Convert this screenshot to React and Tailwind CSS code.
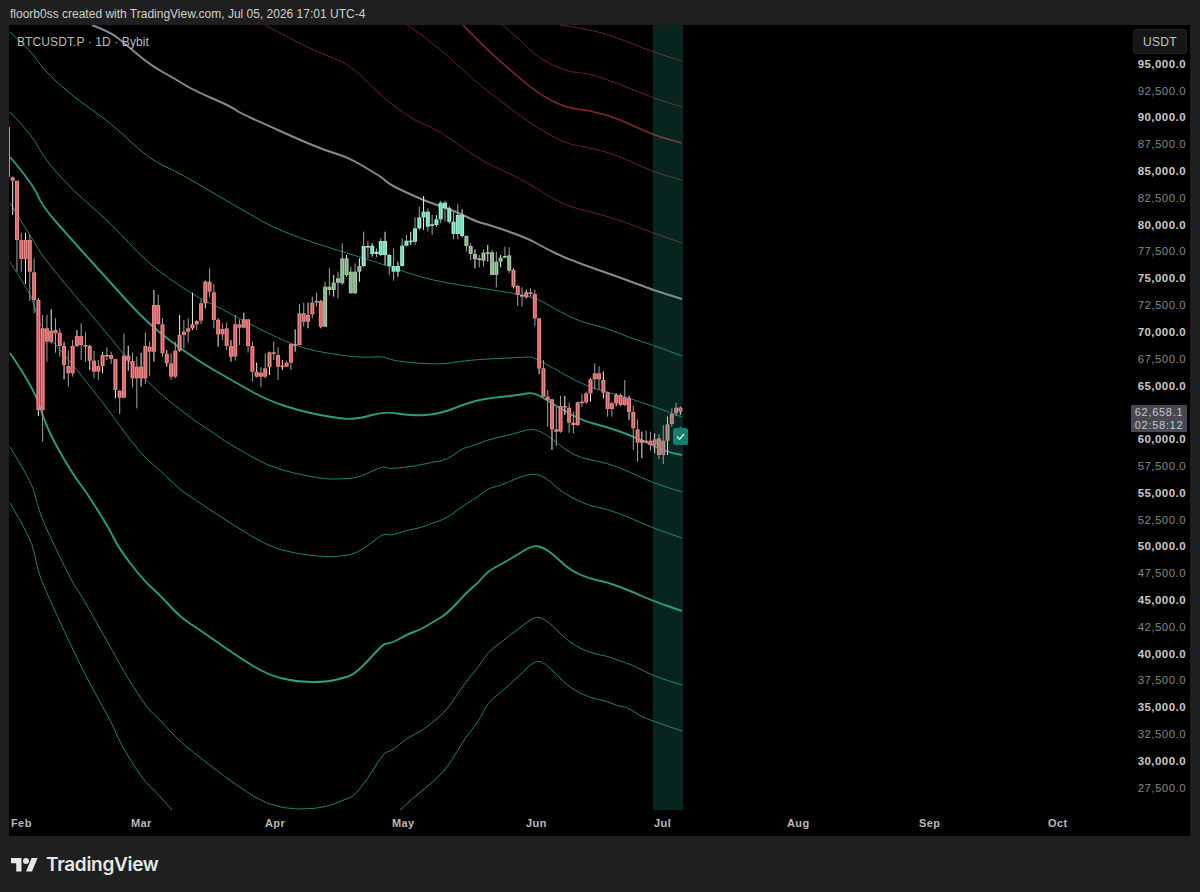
import React from "react"

const FONT = "font-['Liberation_Sans',Arial,sans-serif]"

// chart lines, in page pixels
const REDS = [
  { w: 1, pts: "560,25 587,29 613,36 653,52 682,61" },
  { w: 1, pts: "503,25 520,40 537,57 567,72 587,73 617,83 653,98 682,107" },
  { w: 1.6, pts: "463,25 480,43 510,70 540,95 567,108 587,110 617,118 653,135 682,143" },
  { w: 1, pts: "407,25 427,38 460,67 477,83 510,108 537,128 567,144 587,147 617,155 653,172 682,180" },
  { w: 1, pts: "265,25 293,40 317,52 347,63 363,78 388,102 417,122 430,126 457,143 477,158 497,168 523,180 543,193 567,206 587,211 617,219 653,233 682,243" },
]

const MID = "92,25 110,32 123,42 150,65 177,80 193,90 230,106 240,113 267,125 300,140 327,151 347,157 363,166 383,178 390,185 423,200 437,205 457,212 477,222 490,225 527,238 543,247 567,259 627,280 653,290 682,299"

const GREENS = [
  { w: 1, pts: "10,32 33,53 42,68 73,97 110,122 150,160 180,173 230,203 250,214 270,226 300,238 327,247 360,257 400,270 420,277 447,283 473,287 513,293 537,298 553,308 580,322 607,328 630,338 653,345 682,356" },
  { w: 1, pts: "10,112 33,136 43,157 73,191 110,222 147,263 193,295 220,308 267,333 290,343 300,347 320,352 360,358 383,356 393,361 440,365 467,360 527,357 533,357 553,368 587,387 630,398 682,417" },
  { w: 1.9, pts: "10,157 33,184 42,206 72,240 110,282 147,323 193,358 240,385 267,400 300,411 330,417 355,420 385,411 410,416 440,414 470,402 490,398 520,395 533,392 550,402 580,420 607,427 630,435 667,452 682,455" },
  { w: 1, pts: "10,203 33,240 43,257 72,292 110,337 147,383 193,420 217,435 223,440 240,450 268,466 297,474 325,479 340,479 357,478 370,472 384,466 389,469 407,467 420,465 433,462 447,460 463,448 473,446 487,440 505,436 520,432 533,428 547,435 557,443 573,455 590,460 607,463 630,472 653,483 682,492" },
  { w: 1, pts: "10,262 20,277 33,300 37,316 43,330 75,367 110,412 130,440 147,460 160,470 180,490 200,503 233,525 268,546 297,554 327,557 343,556 357,553 370,544 384,533 390,536 407,530 420,528 433,523 447,518 467,503 478,497 488,488 500,486 517,478 533,473 545,477 557,488 570,497 590,506 607,509 633,519 653,528 682,538" },
  { w: 1.9, pts: "10,353 33,387 43,417 53,440 72,473 87,493 110,530 118,547 143,580 160,595 180,617 197,628 217,642 240,658 268,675 297,682 327,682 343,678 353,675 367,662 384,643 390,644 410,633 420,630 433,622 447,614 467,592 478,583 488,571 500,565 517,555 533,545 545,548 557,558 570,570 590,579 607,582 633,592 653,601 682,611" },
  { w: 1, pts: "10,447 20,463 33,487 37,503 43,522 72,582 80,593 112,650 127,677 147,708 160,720 180,742 207,763 240,788 268,805 297,810 327,807 343,800 353,797 367,780 384,752 390,752 407,738 420,732 433,722 447,710 467,680 478,668 488,652 500,643 517,630 535,616 545,619 557,630 570,643 590,653 607,656 617,660 633,665 653,676 682,685" },
  { w: 1, pts: "10,503 20,520 33,545 37,567 43,585 72,648 93,690 112,723 120,743 143,780 157,793 172,810" },
  { w: 1, pts: "400,810 413,798 433,782 447,768 467,735 478,723 488,702 500,693 517,678 535,660 545,663 557,675 570,688 590,698 607,701 617,706 627,707 642,717 653,721 682,731" },
]

// turn "x,y x,y" into a path that rounds off the corners
function smooth(pts) {
  const p = pts.split(" ").map((s) => s.split(",").map(Number))
  let d = `M${p[0][0]} ${p[0][1]}`
  for (let i = 1; i < p.length - 1; i++) {
    const mx = (p[i][0] + p[i + 1][0]) / 2
    const my = (p[i][1] + p[i + 1][1]) / 2
    d += ` Q${p[i][0]} ${p[i][1]} ${mx} ${my}`
  }
  const last = p[p.length - 1]
  return d + ` L${last[0]} ${last[1]}`
}

// candles: body top, body bottom, wick top, wick bottom (read off at 3x, origin is the crop's top)
const toPage = (origin, rows) => rows.map((r) => r.map((v) => origin + v / 3))

const CANDLES = [
  ...toPage(160, [
    [52,62,50,165],[62,240,62,335],[240,297,218,335],[240,297,218,372],[240,335,225,423],[337,420,295,460],[420,750,415,768],[505,750,465,845],
    [505,545,465,605],[512,545,448,550],[510,520,475,578],[518,558,505,590],[558,615,545,658],[618,640,572,680],[558,640,540,650],[528,558,510,560],
    [528,555,490,600],[555,556,517,605],[558,602,555,630],[602,635,572,655],[618,635,600,660],[585,618,575,640],[585,587,562,600],[585,597,575,612],
    [597,690,597,715],[692,713,690,762],[587,713,520,715],[587,602,557,632],[603,655,578,682],[620,655,590,745],[620,655,578,680],[558,655,518,672],
    [560,575,545,648],[435,575,390,605],[435,492,405,495],[493,580,475,590],[582,610,570,620],[610,650,580,660],[572,650,545,655],[525,572,465,575],
    [515,525,480,565],[505,515,475,548],[493,505,398,510],[483,493,480,510],[430,482,418,492],[365,430,362,445],[365,395,325,412],[397,480,372,505],
    [480,523,475,560],[507,523,490,540],[505,558,488,570],[558,590,540,605],[493,590,465,602],[493,503,478,555],[478,503,458,505],[478,558,478,578],
    [558,635,545,665],[635,650,608,652],[638,650,622,682],[625,650,580,655],[577,622,575,645],[577,580,545,600],[585,620,562,660],[617,619,600,630],
    [608,620,602,622],[552,608,550,630],[553,556,508,575],[460,555,432,555],
  ]),
  ...toPage(180, [
    [400,425,368,440],[405,425,368,445],[368,403,350,415],[363,365,338,380],[363,440,360,445],[320,440,305,440],[320,330,265,345],[308,330,285,350],
    [295,308,275,355],[235,310,190,315],[235,285,225,290],[275,340,260,340],[275,340,250,342],[258,275,235,305],[198,258,155,262],[198,200,182,235],
    [197,222,190,230],[215,222,205,232],[183,225,175,228],[183,225,155,255],[225,258,222,285],[258,275,205,302],[258,275,245,290],[197,258,175,260],
    [182,197,165,200],[182,183,155,195],[145,185,112,195],[112,145,80,150],[95,112,48,150],[95,140,85,155],[133,135,105,165],[118,135,105,140],
    [68,118,62,130],[68,85,62,125],[85,125,80,130],[125,162,95,178],[105,162,72,178],[105,168,88,172],[168,198,165,215],[198,222,190,240],
    [222,237,208,265],[235,240,225,262],[218,242,208,260],[217,218,195,245],[217,285,210,285],[245,285,215,322],[233,245,225,262],[228,232,200,235],
    [226,272,202,280],[270,320,265,325],[318,345,315,378],[345,350,322,380],[337,352,330,355],[337,342,325,350],
  ]),
  ...toPage(280, [
    [42,115,30,138],[115,265,115,282],[265,350,240,350],[350,360,330,440],[358,448,358,510],[448,455,380,498],[378,455,347,458],[378,382,348,405],
    [383,428,368,458],[428,435,395,460],[367,435,365,437],[365,367,342,380],[340,367,335,372],[298,340,295,365],[280,298,250,328],[280,298,258,330],
    [300,338,275,355],[337,387,335,410],[370,387,365,410],[345,370,340,378],[345,375,340,380],[352,375,300,378],[355,396,348,420],[396,445,378,510],
    [448,488,418,545],[480,488,455,535],[482,484,452,490],[482,495,455,512],[478,495,460,520],[475,525,462,538],[482,525,435,552],[433,482,410,525],
    [402,432,385,440],[383,400,368,408],[383,395,380,405],
  ]),
]

function candleColors(i) {
  if (i >= 82 && i <= 105) return { edge: "#a6ecd0", core: "#3fdca6" }
  if ((i >= 73 && i <= 81) || (i >= 106 && i <= 116)) return { edge: "#a9c9a4", core: "#6fa878" }
  return { edge: "#e58c8c", core: "#e2474a" }
}

function Candle({ c, i }) {
  const x = 12.7 + i * 4.28
  const { edge, core } = candleColors(i)
  const h = Math.max(c[1] - c[0], 1.5)
  return (
    <g>
      <line x1={x} x2={x} y1={c[2]} y2={c[3]} stroke={i % 3 === 0 ? "#f0f0f0" : "#a3a3a3"} strokeWidth="1" />
      <rect x={x - 2} y={c[0]} width="4" height={h} fill={edge} />
      {h > 3 && <rect x={x - 0.5} y={c[0] + 0.5} width="1" height={h - 1} fill={core} />}
    </g>
  )
}

function Chart() {
  return (
    <svg viewBox="9 25 1116 785" className="block w-[1116px] h-[785px]">
      {REDS.map((l, i) => (
        <path key={i} d={smooth(l.pts)} fill="none" stroke={l.w > 1 ? "#8a2628" : "#6e2024"} strokeWidth={l.w} />
      ))}
      <path d={smooth(MID)} fill="none" stroke="#8b8894" strokeWidth="2" />
      {GREENS.map((l, i) => (
        <path key={i} d={smooth(l.pts)} fill="none" stroke={l.w > 1 ? "#2a9c83" : "#1f8270"} strokeWidth={l.w} />
      ))}
      <line x1="9.5" x2="9.5" y1="127" y2="177" stroke="#a3a3a3" strokeWidth="1" />
      {CANDLES.map((c, i) => (
        <Candle key={i} c={c} i={i} />
      ))}
      <rect x="653" y="25" width="30" height="785" fill="#26a68a" fillOpacity="0.22" />
      {/* alert badge */}
      <path d="M673 430a2 2 0 0 1 2-2h4l1.500-2 1.500 2h4a2 2 0 0 1 2 2v13a2 2 0 0 1-2 2h-11a2 2 0 0 1-2-2z" fill="#157f6d" />
      <path d="M677 436.500l2.500 2.800 4.500-5.300" fill="none" stroke="#e6f2ef" strokeWidth="1.200" />
    </svg>
  )
}

// 62,500.0 sits under the last price tag, so its row stays empty
const PRICES = [
  "95,000.0", "92,500.0", "90,000.0", "87,500.0", "85,000.0", "82,500.0", "80,000.0", "77,500.0", "75,000.0", "72,500.0",
  "70,000.0", "67,500.0", "65,000.0", "", "60,000.0", "57,500.0", "55,000.0", "52,500.0", "50,000.0", "47,500.0",
  "45,000.0", "42,500.0", "40,000.0", "37,500.0", "35,000.0", "32,500.0", "30,000.0", "27,500.0",
]

const MONTHS = [
  { name: "Feb", w: "w-[120px]" },
  { name: "Mar", w: "w-[134px]" },
  { name: "Apr", w: "w-[127px]" },
  { name: "May", w: "w-[134px]" },
  { name: "Jun", w: "w-[128px]" },
  { name: "Jul", w: "w-[133px]" },
  { name: "Aug", w: "w-[132px]" },
  { name: "Sep", w: "w-[129px]" },
  { name: "Oct", w: "w-[60px]" },
]

function PriceAxis() {
  return (
    <div className="relative flex-1 flex flex-col items-end pr-[4px]">
      <div className="mt-[4px] mr-[-1px] w-[54px] h-[25px] flex items-center justify-center rounded-[3px] bg-[#161616] border border-[#222222] text-[12px] text-[#c4c4c4] tracking-[0.3px]">
        USDT
      </div>
      <div className="mt-[-3px] flex flex-col items-end">
        {PRICES.map((p, i) => {
          const major = p.slice(1, 2) === "0" || p.slice(1, 2) === "5"
          return (
            <div
              key={i}
              className={`h-[26.82px] flex items-center text-[11.500px] tracking-[0.45px] ${major ? "font-bold text-[#c9c9c9]" : "text-[#858585]"}`}
            >
              {p}
            </div>
          )
        })}
      </div>
      {/* last price tag */}
      <div className="absolute left-[6px] top-[380px] w-[56px] h-[27px] bg-[#484852] text-[#c6c6cc] text-[11px] leading-[13px] tracking-[0.7px] flex flex-col items-center justify-center">
        <span className="block">62,658.1</span>
        <span className="block">02:58:12</span>
      </div>
    </div>
  )
}

export default function App() {
  return (
    <div className={`w-[1200px] h-[892px] bg-[#1f1f1f] flex flex-col overflow-hidden ${FONT}`}>
      <div className="h-[25px] pl-[10px] pt-[2px] flex items-center text-[12px] text-[#cfcfcf]">
        floorb0ss created with TradingView.com, Jul 05, 2026 17:01 UTC-4
      </div>

      <div className="ml-[9px] mr-[10px] h-[811px] bg-black flex">
        <div className="w-[1116px] flex flex-col">
          <div className="relative h-[785px]">
            <Chart />
            <div className="absolute left-[8px] top-[8px] text-[12px] text-[#bcbcbc] tracking-[0.1px]">
              BTCUSDT.P · 1D · Bybit
            </div>
          </div>
          <div className="flex-1 flex items-center pl-[2px] text-[11px] font-bold tracking-[0.4px] text-[#b9b9b9]">
            {MONTHS.map((m) => (
              <div key={m.name} className={m.w}>
                {m.name}
              </div>
            ))}
          </div>
        </div>
        <PriceAxis />
      </div>

      <div className="flex-1 flex items-center pl-[11px] gap-[8px] pt-[3px]">
        <svg viewBox="0 0 36 28" className="w-[27px] h-[21px]" fill="#e6e6e6">
          <path d="M14 22H7V11H0V4h14v18zM28 22h-8l7.500-18h8L28 22z" />
          <circle cx="20" cy="8" r="4" />
        </svg>
        <span className="font-['Inter',sans-serif] font-semibold text-[19px] tracking-[-0.3px] text-[#e6e6e6]">TradingView</span>
      </div>
    </div>
  )
}
